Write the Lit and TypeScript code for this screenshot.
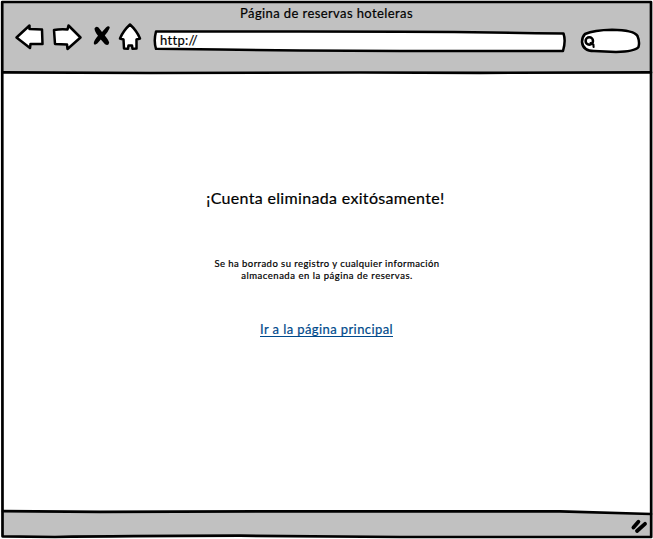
import { LitElement, html, css, svg } from "lit";
import { customElement } from "lit/decorators.js";

const outline = (d: string) =>
  svg`<path d=${d} fill="#fff" stroke="#000" stroke-width="2.5" stroke-linejoin="round" stroke-linecap="round"/>`;

@customElement("app-root")
export class AppRoot extends LitElement {
  static styles = css`
    :host {
      display: block;
    }
    .window {
      position: relative;
      box-sizing: border-box;
      width: 653px;
      height: 539px;
      padding: 2px 2px 2px 3px;
      display: flex;
      flex-direction: column;
      background: #fff;
      color: #000;
      overflow: hidden;
      font-family: Lato, "Noto Sans", sans-serif;
      -webkit-text-stroke: 0.2px currentColor;
    }
    svg {
      display: block;
      flex: none;
    }
    .sketch {
      position: absolute;
      inset: 0;
      pointer-events: none;
    }
    .chrome {
      height: 70px;
      flex: none;
      background: #c1c1c1;
      display: flex;
      flex-direction: column;
    }
    .title {
      box-sizing: border-box;
      font-size: 13px;
      line-height: 16px;
      padding: 3px 1px 0 0;
      height: 18px;
      text-align: center;
    }
    .title span {
      letter-spacing: 0.4px;
    }
    .toolbar {
      display: flex;
      align-items: flex-start;
      padding-left: 11px;
    }
    .nav {
      display: flex;
      width: 137px;
    }
    .field {
      position: relative;
      width: 415px;
      height: 22px;
      margin-top: 9px;
      display: flex;
      align-items: center;
    }
    .field .shape {
      position: absolute;
      inset: 0;
    }
    .url {
      position: relative;
      font-size: 13px;
      line-height: 16px;
      padding-left: 9px;
      letter-spacing: 0.3px;
    }
    .search {
      margin: 7px 0 0 11px;
    }
    .page {
      flex: 1;
      display: flex;
      flex-direction: column;
      align-items: center;
      text-align: center;
    }
    h1 {
      margin: 116px 3px 0 0;
      font-size: 16px;
      line-height: 20px;
      font-weight: 400;
      letter-spacing: 0.33px;
      white-space: nowrap;
    }
    p {
      margin: 50px 0 0;
      font-size: 9.5px;
      line-height: 12px;
      letter-spacing: 0.45px;
      white-space: nowrap;
    }
    .second {
      letter-spacing: 0.52px;
    }
    a {
      margin: 39px 1px 0 0;
      font-size: 13px;
      line-height: 16px;
      height: 15px;
      color: #004a8c;
      border-bottom: 1px solid #004a8c;
      text-decoration: none;
      letter-spacing: 0.41px;
      white-space: nowrap;
    }
    .status {
      height: 25px;
      flex: none;
      background: #c1c1c1;
    }
  `;

  render() {
    return html`
      <div class="window">
        <header class="chrome">
          <div class="title"><span>Página de reservas hoteleras</span></div>
          <div class="toolbar">
            <svg class="nav" width="137" height="34" viewBox="14 20 137 34">
              ${outline("M16.5 37.5 L29.5 25.5 L29.5 29 L42 29.5 L42.5 44 L30.5 44 L30 48 Z")}
              ${outline("M54 30 Q60 29 67.5 29.5 L68.5 25.5 L80.5 37.5 L67.5 49 L67 44.5 L55 44 Z")}
              <path d="M94.5 28.5 Q96 25.5 98.5 27.5 L102 32 L106 27.5 Q109 25 109.8 27.8 Q107.5 33 104.8 35.5 Q108.5 40 109.2 42.5 Q108.5 46.5 105 44.3 L100.8 39.5 L97.3 43.5 Q94.3 45.8 93.8 43.5 Q93.5 41 98 35.8 Q94.5 31.5 94.5 28.5 Z" fill="#000" />
              ${outline("M130 24.5 Q137 31 140 38.5 L136.5 39.5 L136.5 48.5 L132.5 48.8 L132 45.5 L128.5 45.5 L128 48.8 L124 48.5 L123.5 39.5 L120 38.5 Q123 31 130 24.5 Z")}
            </svg>
            <div class="field">
              <svg class="shape" width="415" height="26" viewBox="151 29 415 26">
                ${outline("M156 31.5 L300 31.5 Q350 31.7 400 31.7 Q480 32 563.5 33.5 Q566 41 563 51 L400 51 L300 50.5 L220 49.5 L156 48.8 Q153.5 41 156 31.5 Z")}
              </svg>
              <span class="url">http://</span>
            </div>
            <svg class="search" width="64" height="28" viewBox="577 27 64 28">
              ${outline("M585 34 Q594 30 612 29.7 Q634 30 637.5 36 Q640 42 638.5 47 Q635 51.5 616 52 L594 51 Q583 51 582 42 Q582 37 585 34 Z")}
              <circle cx="589.3" cy="41" r="3.7" fill="none" stroke="#000" stroke-width="2.5" />
              <path d="M590.5 43 L593.4 44.6 L593.6 47" fill="none" stroke="#000" stroke-width="2.1" stroke-linecap="round" />
            </svg>
          </div>
        </header>
        <main class="page">
          <h1>¡Cuenta eliminada exitósamente!</h1>
          <p>
            Se ha borrado su registro y cualquier información<br /><span
              class="second"
              >almacenada en la página de reservas.</span
            >
          </p>
          <a>Ir a la página principal</a>
        </main>
        <footer class="status"></footer>
        <svg class="sketch" width="653" height="539" viewBox="0 0 653 539">
          <path d="M560 511 L651 511 L651 514 Z" fill="#fff" />
          <g fill="none" stroke="#000" stroke-width="2.7" stroke-linejoin="round" stroke-linecap="round">
            <path d="M2.2 2 L651 2 Q650 300 651.2 537 L400 537 L240 535.7 Q120 536 55 537 L2.5 536.3 Q3.5 300 2.2 2 Z" />
            <path d="M3 72.3 L150 73 L360 72.5 L480 72.8 L651 72.4" />
            <path d="M3 511.2 L100 511.9 L300 511.3 L560 511.3 L651 514" />
          </g>
          <g stroke="#000" stroke-width="3.8" stroke-linecap="round">
            <path d="M633.4 527.6 L638.4 521.8" />
            <path d="M637 531 L645 523.8" />
          </g>
        </svg>
      </div>
    `;
  }
}
